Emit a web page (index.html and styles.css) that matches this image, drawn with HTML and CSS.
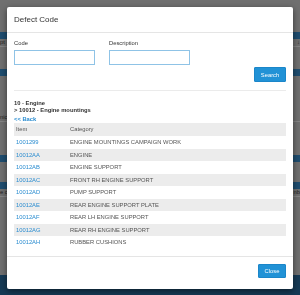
FILE: index.html
```html
<!DOCTYPE html>
<html lang="en">
<head>
    <meta charset="UTF-8">
    <title>Defect Code</title>
    <link rel="stylesheet" href="styles.css">
</head>
<body>
    <!-- Page behind the dialog (dimmed) -->
    <div class="page">
        <div class="page-top"></div>
        <div class="page-bar"></div>
        <div class="page-row"><span>pt</span><span>↓</span></div>
        <div class="page-gap gap-1"></div>
        <div class="page-bar"></div>
        <div class="page-gap gap-2"></div>
        <div class="page-row"><span>nic</span><span></span></div>
        <div class="page-gap gap-3"></div>
        <div class="page-bar"></div>
        <div class="page-gap gap-4"></div>
        <div class="page-bar"></div>
        <div class="page-row"><span>e c</span><span>nb</span></div>
        <div class="page-gap gap-5"></div>
        <div class="page-foot"></div>
    </div>

    <!-- Defect code dialog -->
    <div class="modal">
        <div class="modal-header">Defect Code</div>
        <div class="modal-body">
            <div class="field-row">
                <div class="field">
                    <label for="code">Code</label>
                    <input type="text" id="code">
                </div>
                <div class="field">
                    <label for="description">Description</label>
                    <input type="text" id="description">
                </div>
            </div>
            <div class="search-row">
                <button class="btn">Search</button>
            </div>
            <hr>
            <div class="crumbs">
                <div>10 - Engine</div>
                <div>&gt; 10012 - Engine mountings</div>
            </div>
            <a href="#" class="back-link">&lt;&lt; Back</a>
            <table class="code-table">
                <thead>
                    <tr><th class="col-item">Item</th><th>Category</th></tr>
                </thead>
                <tbody>
                    <tr><td><a href="#">1001299</a></td><td>ENGINE MOUNTINGS CAMPAIGN WORK</td></tr>
                    <tr><td><a href="#">10012AA</a></td><td>ENGINE</td></tr>
                    <tr><td><a href="#">10012AB</a></td><td>ENGINE SUPPORT</td></tr>
                    <tr><td><a href="#">10012AC</a></td><td>FRONT RH ENGINE SUPPORT</td></tr>
                    <tr><td><a href="#">10012AD</a></td><td>PUMP SUPPORT</td></tr>
                    <tr><td><a href="#">10012AE</a></td><td>REAR ENGINE SUPPORT PLATE</td></tr>
                    <tr><td><a href="#">10012AF</a></td><td>REAR LH ENGINE SUPPORT</td></tr>
                    <tr><td><a href="#">10012AG</a></td><td>REAR RH ENGINE SUPPORT</td></tr>
                    <tr><td><a href="#">10012AH</a></td><td>RUBBER CUSHIONS</td></tr>
                </tbody>
            </table>
        </div>
        <div class="modal-footer">
            <button class="btn btn-close">Close</button>
        </div>
    </div>
</body>
</html>
```

FILE: styles.css
```css
body {
    font-family: "Liberation Sans", Arial, sans-serif;
    margin: 0;
    padding: 0;
    background-color: #6f6f6f;
    overflow: hidden;
}

/* dimmed page behind */
.page {
    height: 295px;
    display: flex;
    flex-direction: column;
}
.page-top {
    height: 32px;
}
.page-bar {
    height: 7px;
    background-color: #1f4d6f;
}
.page-row {
    height: 7px;
    border-bottom: 1px solid #858585;
    display: flex;
    justify-content: space-between;
    font-size: 5.8px;
    line-height: 7px;
    color: #222;
}
.page-row span {
    width: 7px;
    overflow: hidden;
    white-space: nowrap;
}
.page-row span:last-child {
    text-align: right;
}
.gap-1 { height: 22px; }
.gap-2 { height: 38px; }
.gap-3 { height: 33px; }
.gap-4 { height: 20px; }
.gap-5 { height: 78px; }
.page-foot {
    flex: 1;
    background-color: #163a55;
}

/* dialog */
.modal {
    position: fixed;
    top: 7px;
    left: 7px;
    width: 286px;
    height: 282px;
    background-color: #ffffff;
    border-radius: 2px;
    box-shadow: 0 2px 6px rgba(0, 0, 0, 0.5);
    display: flex;
    flex-direction: column;
}
.modal-header {
    height: 25px;
    padding: 0 7px;
    border-bottom: 1px solid #e5e5e5;
    display: flex;
    align-items: center;
    font-size: 8px;
    color: #333333;
}
.modal-body {
    padding: 7px 7px 7px;
}
.field-row {
    display: flex;
    gap: 14px;
}
.field label {
    display: block;
    font-size: 5.8px;
    line-height: 7px;
    color: #333333;
    margin-bottom: 3px;
}
.field input {
    display: block;
    box-sizing: border-box;
    width: 81px;
    height: 15px;
    margin: 0;
    border: 1px solid #8fc3e6;
    border-radius: 0;
    padding: 0 3px;
    font-size: 6px;
}
.search-row {
    display: flex;
    justify-content: flex-end;
    margin-top: 2px;
}
.btn {
    box-sizing: border-box;
    height: 15px;
    width: 32px;
    padding: 0;
    border: 1px solid #1b86c9;
    border-radius: 1px;
    background-color: #2192d6;
    color: #ffffff;
    font-family: "Liberation Sans", Arial, sans-serif;
    font-size: 5.8px;
    cursor: pointer;
}
hr {
    margin: 8px 0 0;
    border: 0;
    border-top: 1px solid #ebebeb;
}
.crumbs {
    margin-top: 9px;
    font-size: 5.8px;
    font-weight: bold;
    line-height: 7px;
    color: #333333;
}
.back-link {
    display: block;
    margin-top: 1.5px;
    font-size: 5.8px;
    font-weight: bold;
    line-height: 7px;
    color: #2a8cd0;
    text-decoration: none;
}
.code-table {
    width: 100%;
    margin-top: 0.5px;
    border-collapse: collapse;
    table-layout: fixed;
    font-size: 5.8px;
}
.code-table th {
    text-align: left;
    font-weight: normal;
    color: #555555;
    background-color: #ececec;
    padding: 3px 2px;
    line-height: 7px;
}
.code-table .col-item {
    width: 50px;
}
.code-table td {
    padding: 3px 2px;
    line-height: 6.5px;
    color: #555555;
    white-space: nowrap;
}
.code-table tbody tr:nth-child(even) {
    background-color: #ececec;
}
.code-table a {
    color: #2a8cd0;
    text-decoration: none;
}
.modal-footer {
    flex: 1;
    border-top: 1px solid #e5e5e5;
    padding: 7px 7px;
    display: flex;
    justify-content: flex-end;
    align-items: flex-start;
}
.btn-close {
    width: 28px;
    height: 14px;
}
```
